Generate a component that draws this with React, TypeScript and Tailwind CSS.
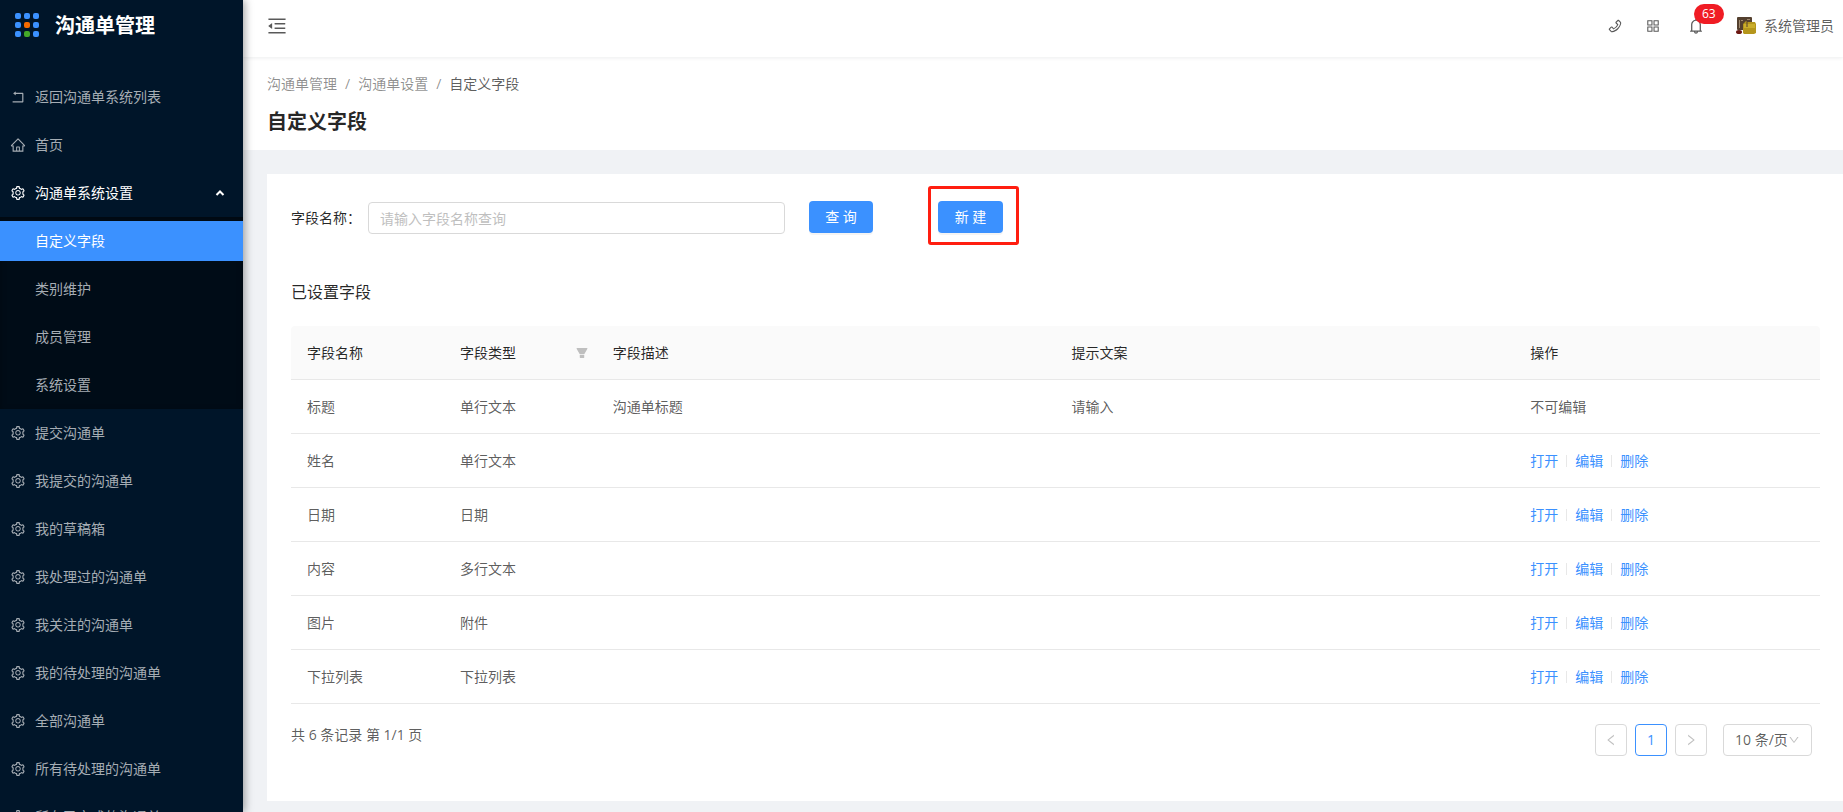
import { Fragment } from "react";
import type { ReactNode } from "react";
import {
  AiFillFilter,
  AiOutlineAppstore,
  AiOutlineBell,
  AiOutlineDown,
  AiOutlineHome,
  AiOutlineLeft,
  AiOutlineMenuFold,
  AiOutlinePhone,
  AiOutlineRight,
  AiOutlineRollback,
  AiOutlineSetting,
} from "react-icons/ai";

interface FieldRow {
  name: string;
  type: string;
  desc?: string;
  tip?: string;
  locked?: boolean;
}

const subMenu = ["自定义字段", "类别维护", "成员管理", "系统设置"];

const menu = [
  "提交沟通单",
  "我提交的沟通单",
  "我的草稿箱",
  "我处理过的沟通单",
  "我关注的沟通单",
  "我的待处理的沟通单",
  "全部沟通单",
  "所有待处理的沟通单",
  "所有已完成的沟通单",
];

const rows: FieldRow[] = [
  { name: "标题", type: "单行文本", desc: "沟通单标题", tip: "请输入", locked: true },
  { name: "姓名", type: "单行文本" },
  { name: "日期", type: "日期" },
  { name: "内容", type: "多行文本" },
  { name: "图片", type: "附件" },
  { name: "下拉列表", type: "下拉列表" },
];

const actions = ["打开", "编辑", "删除"];

function Logo() {
  const points = [2, 11, 20];
  return (
    <svg viewBox="0 0 24 24" className="w-6 h-6 shrink-0">
      {points.map((y) =>
        points.map((x) => {
          let fill = "#3b91ff";
          if (x === 11 && y === 11) fill = "#f56a00";
          if (x === 11 && y === 20) fill = "#43a828";
          return (
            <rect key={`${x}-${y}`} x={x - 2} y={y - 2} width="6" height="6" rx="2" fill={fill} />
          );
        }),
      )}
    </svg>
  );
}

function Avatar() {
  return (
    <svg viewBox="0 0 20 18" className="w-5 h-[18px]">
      <rect x="1" y="0" width="15" height="13" rx="1" fill="#54402f" />
      <path d="M3 3h1v8h-1zM5 3h2v1h-2zM11 2h3v1h-3z" fill="#a08a70" />
      <path d="M7 7l3-3 1 1h8l1 2v9l-2 1H8l-1-1z" fill="#b5961c" />
      <path d="M8 7h11v4H8z" fill="#cbae2c" />
      <path d="M11 5v5" stroke="#54402f" />
      <ellipse cx="3" cy="15" rx="3" ry="2" fill="#6b1712" />
    </svg>
  );
}

function MenuItem({ icon, label }: { icon: ReactNode; label: string }) {
  return (
    <li>
      <a href="#" className="flex items-center h-12 pl-[10px] gap-[9px] hover:text-white">
        {icon}
        <span>{label}</span>
      </a>
    </li>
  );
}

function Sidebar() {
  return (
    <aside className="relative z-10 w-[243px] shrink-0 bg-[#001529] text-[#a6adb4] shadow-[2px_0_8px_rgba(0,0,0,0.35)]">
      <div className="flex items-center h-[50px] pl-[15px] gap-4">
        <Logo />
        <span className="pt-[2px] text-xl font-bold text-white">沟通单管理</span>
      </div>
      <nav className="mt-[23px]">
        <ul>
          <MenuItem icon={<AiOutlineRollback size={16} />} label="返回沟通单系统列表" />
          <MenuItem icon={<AiOutlineHome size={16} />} label="首页" />
          <li>
            <button className="flex items-center w-full h-12 pl-[10px] pr-[18px] gap-[9px] text-white">
              <AiOutlineSetting size={16} />
              <span>沟通单系统设置</span>
              <svg viewBox="0 0 10 10" className="w-[10px] h-[10px] ml-auto">
                <path d="M1.5 7L5 3.5L8.5 7" fill="none" stroke="#fff" strokeWidth="2" />
              </svg>
            </button>
            <ul className="bg-[#000c17] shadow-[inset_0_2px_6px_rgba(0,0,0,0.3)]">
              {subMenu.map((label, i) => (
                <li key={label} className="py-1">
                  <a
                    href="#"
                    className={`flex items-center h-10 pl-[35px] ${i === 0 ? "bg-[#3b91ff] text-white" : "hover:text-white"}`}
                  >
                    {label}
                  </a>
                </li>
              ))}
            </ul>
          </li>
          {menu.map((label) => (
            <MenuItem key={label} icon={<AiOutlineSetting size={16} />} label={label} />
          ))}
        </ul>
      </nav>
    </aside>
  );
}

function TopBar() {
  return (
    <header className="relative flex items-center justify-between h-[57px] pl-[23px] pr-[9px] pb-[6px] bg-white shadow-[0_1px_4px_rgba(0,21,41,0.08)]">
      <button aria-label="收起菜单">
        <AiOutlineMenuFold size={22} />
      </button>
      <div className="flex items-center">
        <button aria-label="电话" className="mr-[22px]">
          <AiOutlinePhone size={16} />
        </button>
        <button aria-label="应用" className="mr-[26px]">
          <AiOutlineAppstore size={16} />
        </button>
        <button aria-label="通知" className="relative mr-[31px]">
          <AiOutlineBell size={18} />
          <span className="absolute -top-[13px] left-[7px] px-2 h-5 rounded-full bg-[#f01c24] text-xs leading-5 text-white">
            63
          </span>
        </button>
        <a href="#" className="flex items-center gap-2">
          <Avatar />
          系统管理员
        </a>
      </div>
    </header>
  );
}

function PageHeader() {
  return (
    <div className="h-[93px] pl-6 pt-4 bg-white">
      <nav className="flex gap-2 leading-[22px] text-black/45">
        <a href="#">沟通单管理</a>
        <span>/</span>
        <a href="#">沟通单设置</a>
        <span>/</span>
        <span className="text-black/65">自定义字段</span>
      </nav>
      <h1 className="mt-[13px] text-xl leading-7 font-bold text-black/85">自定义字段</h1>
    </div>
  );
}

function SearchForm() {
  return (
    <form className="flex items-start pt-3">
      <div className="flex items-center mt-4">
        <label htmlFor="fieldName" className="text-black/85">
          字段名称：
        </label>
        <input
          id="fieldName"
          type="text"
          placeholder="请输入字段名称查询"
          className="w-[417px] h-8 ml-[7px] px-[11px] border border-[#d9d9d9] rounded placeholder:text-[#bfbfbf]"
        />
      </div>
      <button type="button" className="w-16 h-8 mt-[15px] ml-6 rounded bg-[#3b91ff] text-white shadow-[0_2px_0_rgba(0,0,0,0.045)]">
        查 询
      </button>
      <div className="ml-[55px] pt-3 pb-[9px] pl-[7px] pr-[13px] border-3 border-[#ff1e10] rounded-[3px]">
        <button type="button" className="block w-[65px] h-8 rounded bg-[#3b91ff] text-white shadow-[0_2px_0_rgba(0,0,0,0.045)]">
          新 建
        </button>
      </div>
    </form>
  );
}

function FieldTable() {
  return (
    <table className="w-full table-fixed text-left leading-[21px]">
      <thead>
        <tr className="bg-[#fafafa] border-b border-[#e8e8e8] text-black/85">
          <th className="w-[10%] p-4 font-normal rounded-tl">字段名称</th>
          <th className="w-[10%] py-4 pl-4 pr-2 font-normal">
            <div className="flex items-center justify-between">
              字段类型
              <AiFillFilter size={14} className="text-[#bfbfbf]" />
            </div>
          </th>
          <th className="w-[30%] p-4 font-normal">字段描述</th>
          <th className="w-[30%] p-4 font-normal">提示文案</th>
          <th className="w-[20%] p-4 font-normal rounded-tr">操作</th>
        </tr>
      </thead>
      <tbody>
        {rows.map((row) => (
          <tr key={row.name} className="border-b border-[#e8e8e8]">
            <td className="p-4">{row.name}</td>
            <td className="p-4">{row.type}</td>
            <td className="p-4">{row.desc}</td>
            <td className="p-4">{row.tip}</td>
            <td className="p-4">
              {row.locked ? (
                "不可编辑"
              ) : (
                <div className="flex items-center">
                  {actions.map((action, i) => (
                    <Fragment key={action}>
                      {i > 0 && <span className="w-px h-3 mx-2 bg-[#e8e8e8]" />}
                      <a href="#" className="text-[#3b91ff]">
                        {action}
                      </a>
                    </Fragment>
                  ))}
                </div>
              )}
            </td>
          </tr>
        ))}
      </tbody>
    </table>
  );
}

function Pagination() {
  return (
    <div className="flex items-start justify-between pt-5 pr-2">
      <p className="leading-[22px]">共 6 条记录 第 1/1 页</p>
      <div className="flex gap-2">
        <button aria-label="上一页" className="flex items-center justify-center size-8 border border-[#d9d9d9] rounded text-black/25">
          <AiOutlineLeft size={14} />
        </button>
        <button className="size-8 border border-[#3b91ff] rounded text-[#3b91ff]">1</button>
        <button aria-label="下一页" className="flex items-center justify-center size-8 border border-[#d9d9d9] rounded text-black/25">
          <AiOutlineRight size={14} />
        </button>
        <div className="relative ml-2">
          <select
            aria-label="每页条数"
            className="w-[89px] h-8 pl-[11px] border border-[#d9d9d9] rounded appearance-none bg-white"
          >
            <option>10 条/页</option>
          </select>
          <AiOutlineDown size={12} className="absolute right-3 top-[10px] text-black/25 pointer-events-none" />
        </div>
      </div>
    </div>
  );
}

export default function App() {
  return (
    <div className="flex h-screen overflow-hidden bg-[#f0f2f5] text-sm text-black/65 font-['Open_Sans','Noto_Sans_CJK_SC',sans-serif]">
      <Sidebar />
      <div className="flex-1 min-w-0">
        <TopBar />
        <PageHeader />
        <main className="mt-6 ml-6 pl-6 pr-[23px] pb-[45px] bg-white">
          <SearchForm />
          <h2 className="mt-[35px] mb-[22px] text-base leading-6 text-black/85">已设置字段</h2>
          <FieldTable />
          <Pagination />
        </main>
      </div>
    </div>
  );
}
